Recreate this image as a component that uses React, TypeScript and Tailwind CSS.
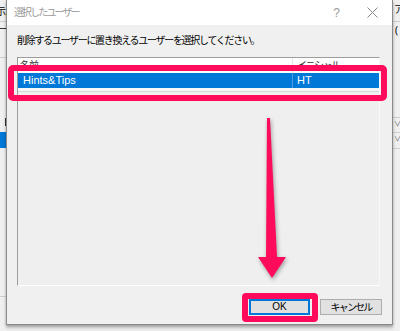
const Line = () => <div className="h-px w-full bg-[#cfcfcf] shrink-0"></div>;

const App = () => {
    return (
        <div className="relative w-[400px] h-[331px] overflow-hidden bg-[#ececec] text-black flex" style={{ fontFamily: '"Noto Sans", "Noto Sans CJK JP", sans-serif' }}>
            {/* window behind, left side */}
            <div className="w-[6px] h-full bg-[#f0f0f0] flex flex-col overflow-hidden shrink-0">
                <p className="mt-[6px] ml-[-4px] h-[15px] text-[10px] leading-none tracking-[-1.5px] whitespace-nowrap">示ス</p>
                <Line />
                <p className="mt-[2px] ml-[-3px] h-[33px] text-[10px] leading-none">ー</p>
                <Line />
                <div className="mt-[60px] ml-[5px] w-[2px] h-[8px] bg-[#333] shrink-0"></div>
                <div className="mt-[6px] w-full h-[16px] bg-[#0078d7] shrink-0"></div>
                <div className="mt-[148px]"><Line /></div>
            </div>

            {/* dialog */}
            <div className="w-[387px] h-[325px] flex flex-col bg-[#f0f0f0] border-x border-b border-[#8a8a8a] shadow-[0_2px_3px_rgba(0,0,0,0.35)] shrink-0 z-10">
                <div className="h-[25px] bg-white flex items-center justify-between pl-[7px] pr-[14px] shrink-0">
                    <p className="text-[10px] tracking-[-1.9px] text-[#999]">選択したユーザー</p>
                    <div className="flex items-center gap-[27px] text-[#9a9a9a]">
                        <span className="text-[12px]" style={{ fontFamily: '"Liberation Sans", sans-serif' }}>?</span>
                        <svg width="11" height="11" viewBox="0 0 11 11" stroke="#8a8a8a" strokeWidth="1">
                            <path d="M0.5 0.5 L10.5 10.5 M10.5 0.5 L0.5 10.5" />
                        </svg>
                    </div>
                </div>

                <p className="mt-[8px] ml-[10px] text-[10px] leading-[14px] tracking-[-1.3px] whitespace-nowrap">削除するユーザーに置き換えるユーザーを選択してください。</p>

                <div className="mt-[10px] ml-[10px] w-[363px] h-[229px] border-t border-l border-[#9d9d9d] border-b border-r border-b-white border-r-[#f8f8f8] bg-[#efefef] flex flex-col">
                    <div className="h-[15px] bg-white flex text-[10px] leading-[15px] text-[#333]">
                        <div className="w-[275px] pl-[2px] border-r border-[#e5e5e5] tracking-[-1px]">名前</div>
                        <div className="pl-[4px] tracking-[-1.5px]">イニシャル</div>
                    </div>
                    <div className="h-[15px] bg-[#0078d7] flex text-white text-[11px] leading-[15px]" style={{ fontFamily: '"Liberation Sans", sans-serif' }}>
                        <div className="w-[275px] pl-[5px] border-r border-[#4a9be0]">Hints&amp;Tips</div>
                        <div className="pl-[4px]">HT</div>
                    </div>
                    <div className="h-[4px] bg-[#f7f7f7] border-b border-[#d6d6d6]"></div>
                </div>

                <div className="mt-[13px] flex justify-end gap-[10px] pr-[10px]">
                    <button className="w-[61px] h-[16px] bg-[#e1e1e1] border-2 border-[#0078d7] text-[10px] leading-none" style={{ fontFamily: '"Liberation Sans", sans-serif' }}>OK</button>
                    <button className="w-[62px] h-[16px] bg-[#e1e1e1] border border-[#adadad] text-[10px] leading-none tracking-[-1.8px]">キャンセル</button>
                </div>
            </div>

            {/* window behind, right side */}
            <div className="flex-1 h-full bg-[#f0f0f0] flex flex-col overflow-hidden">
                <p className="mt-[4px] ml-[1px] h-[17px] text-[10px] leading-none">ア</p>
                <Line />
                <p className="mt-[3px] ml-[2px] h-[92px] text-[10px] leading-none">(</p>
                <Line />
                <p className="ml-[1px] h-[14px] text-[7px] leading-[12px] text-[#555]">∨</p>
                <Line />
                <p className="ml-[1px] h-[15px] text-[7px] leading-[12px] text-[#555]">∨</p>
                <Line />
            </div>

            {/* annotations */}
            <div className="absolute left-[8px] top-[65px] w-[379px] h-[36px] border-[6px] border-[#fe0b5b] rounded-[5px] z-20"></div>
            <div className="absolute left-[242px] top-[293px] w-[76px] h-[29px] border-[6px] border-[#fe0b5b] rounded-[4px] z-20"></div>
            <svg className="absolute left-0 top-0 z-20" width="400" height="331" style={{ filter: 'drop-shadow(1px 2px 2px rgba(0,0,0,0.35))' }}>
                <polygon points="267,118 270,118 277,257 286,257 272,278 258,257 266,257" fill="#fe0b5b" />
            </svg>
        </div>
    );
}

export default App;
